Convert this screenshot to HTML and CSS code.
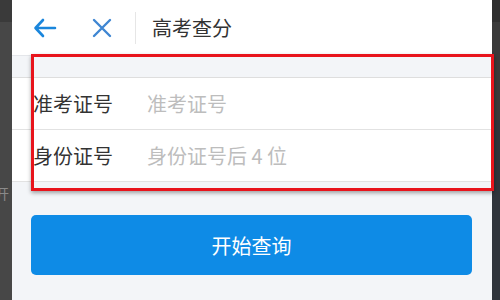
FILE: index.html
```html
<!DOCTYPE html>
<html lang="zh-CN">

<head>
    <meta charset="UTF-8">
    <meta name="viewport" content="width=device-width, initial-scale=1.0">
    <title>高考查分</title>
    <link rel="stylesheet" href="styles.css">
</head>

<body>
    <div class="shell">
        <div class="side side-left">
            <span class="side-text">开</span>
        </div>
        <div class="page">
            <header class="topbar">
                <button class="icon-btn back" aria-label="返回">
                    <svg width="24" height="20" viewBox="0 0 24 20">
                        <path d="M22 10H3M10 2L2.5 10L10 18" fill="none" stroke="#1a86dc" stroke-width="2.6" stroke-linecap="round" stroke-linejoin="round"/>
                    </svg>
                </button>
                <button class="icon-btn close" aria-label="关闭">
                    <svg width="20" height="20" viewBox="0 0 20 20">
                        <path d="M2 2L18 18M18 2L2 18" fill="none" stroke="#3f86d2" stroke-width="2.4" stroke-linecap="round"/>
                    </svg>
                </button>
                <span class="divider"></span>
                <h1 class="title">高考查分</h1>
            </header>

            <div class="content">
                <div class="form">
                    <label class="row">
                        <span class="label">准考证号</span>
                        <input class="field" type="text" placeholder="准考证号">
                    </label>
                    <label class="row">
                        <span class="label">身份证号</span>
                        <input class="field" type="text" placeholder="身份证号后 4 位">
                    </label>
                </div>
                <button class="submit">开始查询</button>
            </div>

            <div class="mark"></div>
        </div>
        <div class="side side-right"></div>
    </div>
</body>

</html>
```

FILE: styles.css
```css
* {
    box-sizing: border-box;
    margin: 0;
    padding: 0;
}

body {
    width: 500px;
    height: 300px;
    overflow: hidden;
    background: #464646;
    font-family: "Noto Sans CJK SC", "Noto Sans", sans-serif;
}

.shell {
    display: flex;
    height: 300px;
}

.side {
    flex: none;
}

.side-left {
    width: 12px;
    background: linear-gradient(#3a3a3a 0, #3a3a3a 22px, #474747 22px);
    position: relative;
    overflow: hidden;
}

.side-text {
    position: absolute;
    top: 183px;
    left: -5px;
    font-size: 14px;
    color: #8a8a8a;
}

.side-right {
    width: 8px;
    background: linear-gradient(#2f2f2f 0, #2f2f2f 22px, #3a3a3a 22px, #3a3a3a 120px, #2f353c 120px);
}

.page {
    position: relative;
    width: 480px;
    background: #f3f5f8;
}

.topbar {
    display: flex;
    align-items: center;
    height: 56px;
    background: #fff;
    border-bottom: 1px solid #e4e6ea;
}

.icon-btn {
    display: flex;
    align-items: center;
    justify-content: center;
    border: none;
    background: none;
}

.back {
    margin-left: 21px;
    width: 24px;
}

.close {
    margin-left: 35px;
    width: 20px;
}

.divider {
    width: 1px;
    height: 32px;
    margin-left: 23px;
    background: #e6e6e6;
}

.title {
    margin-left: 16px;
    font-size: 20px;
    font-weight: normal;
    color: #333;
}

.content {
    padding-top: 21px;
}

.form {
    background: #fff;
    border-top: 1px solid #dedede;
}

.row {
    display: flex;
    align-items: center;
    height: 52px;
    border-bottom: 1px solid #e2e2e2;
}

.label {
    width: 135px;
    padding-left: 21px;
    font-size: 20px;
    color: #333;
}

.field {
    flex: 1;
    border: none;
    outline: none;
    background: none;
    font-family: inherit;
    font-size: 20px;
    color: #333;
}

.field::placeholder {
    color: #bdbdbd;
}

.submit {
    display: block;
    width: 441px;
    height: 60px;
    margin: 33px 0 0 19px;
    border: none;
    border-radius: 5px;
    background: #0e8be6;
    color: #fff;
    font-family: inherit;
    font-size: 20px;
}

/* red annotation frame drawn over the form */
.mark {
    position: absolute;
    top: 54px;
    left: 19px;
    width: 463px;
    height: 137px;
    border: 3px solid #e8141c;
    box-shadow: 0 2px 4px rgba(0, 0, 0, 0.35);
    pointer-events: none;
}
```
